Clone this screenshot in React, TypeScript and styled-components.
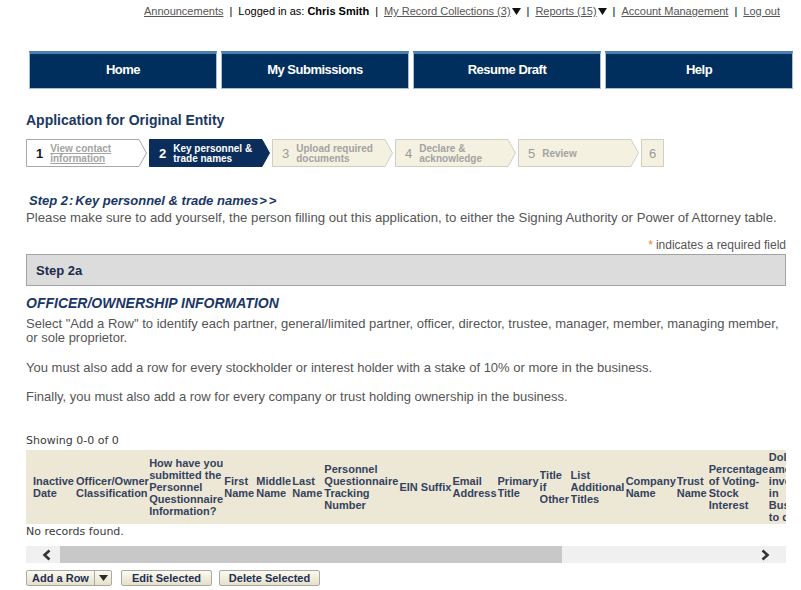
import React from 'react';
import styled, { createGlobalStyle } from 'styled-components';

const Global = createGlobalStyle`
  html, body { margin: 0; padding: 0; background: #fff; overflow: hidden; }
  body { font-family: "Liberation Sans", Arial, sans-serif; }
  * { box-sizing: border-box; }
`;

const Page = styled.div`
  width: 801px;
  height: 590px;
  overflow: hidden;
`;

const TopBar = styled.div`
  height: 22px;
  display: flex;
  justify-content: flex-end;
  align-items: center;
  padding-right: 21px;
  font-size: 11px;
  color: #000;
  white-space: nowrap;
`;

const TopLink = styled.a`
  color: #555;
  text-decoration: underline;
  cursor: pointer;
`;

const Sep = styled.span`
  margin: 0 6px;
  color: #000;
`;

const Caret = styled.svg`
  width: 9px;
  height: 7px;
  margin-left: 1px;
  vertical-align: 1px;
`;

const Content = styled.div`
  padding-left: 26px;
  width: 801px;
`;

const Nav = styled.nav`
  display: flex;
  gap: 4px;
  margin: 29px 0 0 3px;
`;

const Tab = styled.a`
  flex: 0 0 188px;
  height: 38px;
  display: flex;
  align-items: center;
  justify-content: center;
  padding-bottom: 4px;
  background: #002f5e;
  border: 1px solid #a7bfd8;
  border-top: 3px solid #4d7db5;
  color: #fff;
  font-family: "Liberation Sans Narrow", "Liberation Sans", Arial, sans-serif;
  font-stretch: condensed;
  font-weight: bold;
  font-size: 13px;
  letter-spacing: -0.5px;
  cursor: pointer;
`;

const Title = styled.h1`
  margin: 22px 0 0;
  font-size: 14px;
  line-height: 18px;
  font-weight: bold;
  color: #1a3766;
`;

const Stepper = styled.div`
  display: flex;
  gap: 2px;
  margin-top: 10px;
  height: 28px;
`;

const StepBox = styled.div<{ $w: number; $pad: number }>`
  position: relative;
  width: ${p => p.$w}px;
  height: 28px;
  display: flex;
  align-items: center;
  gap: 7px;
  padding-left: ${p => p.$pad}px;
`;

const StepShape = styled.svg`
  position: absolute;
  left: 0;
  top: 0;
  z-index: 0;
`;

const StepNum = styled.span<{ $state: string }>`
  position: relative;
  z-index: 1;
  font-size: 13px;
  margin-top: 1px;
  font-weight: ${p => (p.$state === 'future' ? 'normal' : 'bold')};
  color: ${p => (p.$state === 'current' ? '#fff' : p.$state === 'done' ? '#1a1a1a' : '#9a9a9a')};
`;

const StepLabel = styled.span<{ $state: string }>`
  position: relative;
  z-index: 1;
  margin-top: 2px;
  font-size: 10px;
  line-height: 10px;
  font-weight: bold;
  color: ${p => (p.$state === 'current' ? '#fff' : '#a3a3a3')};
  text-decoration: ${p => (p.$state === 'done' ? 'underline' : 'none')};
`;

const StepHeading = styled.h2`
  margin: 25px 0 0 3px;
  font-size: 13px;
  line-height: 18px;
  font-weight: bold;
  font-style: italic;
  color: #1a3766;
`;

const Colon = styled.span`
  margin: 0 2px 0 1px;
`;

const Arrows = styled.span`
  margin-left: 1px;
  letter-spacing: 2px;
`;

const Para = styled.p<{ $mt?: number; $size?: number; $lh?: number }>`
  margin: ${p => p.$mt ?? 0}px 0 0;
  font-size: ${p => p.$size ?? 13}px;
  line-height: ${p => p.$lh ?? 14}px;
  color: #555;
  width: 760px;
`;

const Required = styled.div`
  margin-top: 13px;
  width: 760px;
  text-align: right;
  font-size: 12px;
  line-height: 12px;
  color: #555;
`;

const Star = styled.span`
  color: #e8833a;
  margin-right: 3px;
`;

const SectionBar = styled.div`
  margin-top: 3px;
  width: 760px;
  height: 32px;
  background: #dcdcdc;
  border: 1px solid #a3a3a3;
  display: flex;
  align-items: center;
  padding-left: 9px;
  font-size: 13px;
  font-weight: bold;
  color: #1b2b4b;
`;

const SectionHeading = styled.h3`
  margin: 9px 0 0;
  font-size: 14px;
  line-height: 16px;
  font-weight: bold;
  font-style: italic;
  color: #1a3766;
`;

const GridInfo = styled.div<{ $mt: number }>`
  margin-top: ${p => p.$mt}px;
  font-family: "DejaVu Sans", Verdana, sans-serif;
  font-size: 11px;
  line-height: 13px;
  color: #3a3a3a;
`;

const TableClip = styled.div`
  margin-top: 3px;
  width: 760px;
  overflow: hidden;
`;

const Table = styled.table`
  border-collapse: collapse;
  table-layout: fixed;
  width: 795px;
`;

const Th = styled.th<{ $first?: boolean }>`
  background: #ede8d6;
  padding: 1px 0 1px ${p => (p.$first ? 7 : 0)}px;
  text-align: left;
  vertical-align: middle;
  font-size: 11px;
  line-height: 12px;
  font-weight: bold;
  color: #34425f;
  overflow: hidden;
`;

const NoWrap = styled.span`
  white-space: nowrap;
`;

const ScrollBar = styled.div`
  margin-top: 8px;
  width: 760px;
  height: 17px;
  background: #f0f0f0;
  display: flex;
  align-items: stretch;
`;

const ScrollBtn = styled.div<{ $side: 'left' | 'right' }>`
  width: 34px;
  display: flex;
  align-items: center;
  justify-content: center;
  padding-left: ${p => (p.$side === 'left' ? 8 : 0)}px;
  padding-right: ${p => (p.$side === 'right' ? 8 : 0)}px;
`;

const Thumb = styled.div`
  width: 502px;
  background: #c8c8c8;
`;

const Track = styled.div`
  flex: 1;
`;

const ButtonRow = styled.div`
  margin-top: 7px;
  display: flex;
  align-items: center;
`;

const Btn = styled.button<{ $w: number; $ml?: number }>`
  width: ${p => p.$w}px;
  height: 16px;
  margin-left: ${p => p.$ml ?? 0}px;
  padding: 0;
  border: 1px solid #a9a9a9;
  border-radius: 2px;
  background: linear-gradient(#fcfaf1, #e7e0c8);
  font-family: "Liberation Sans", Arial, sans-serif;
  font-size: 11px;
  font-weight: bold;
  color: #1d2f55;
  display: flex;
  align-items: center;
  justify-content: center;
  cursor: pointer;
`;

const SplitBtn = styled.div`
  display: flex;
  height: 16px;
  border: 1px solid #a9a9a9;
  border-radius: 2px;
  background: linear-gradient(#fcfaf1, #e7e0c8);
  font-size: 11px;
  font-weight: bold;
  color: #1d2f55;
`;

const SplitMain = styled.span`
  width: 68px;
  display: flex;
  align-items: center;
  justify-content: center;
  border-right: 1px solid #a9a9a9;
`;

const SplitArrow = styled.span`
  width: 16px;
  display: flex;
  align-items: center;
  justify-content: center;
`;

type StepDef = { n: string; label: React.ReactNode; state: 'done' | 'current' | 'future'; w: number; arrow: boolean };

const steps: StepDef[] = [
  { n: '1', label: <>View contact<br />information</>, state: 'done', w: 121, arrow: true },
  { n: '2', label: <>Key personnel &amp;<br />trade names</>, state: 'current', w: 121, arrow: true },
  { n: '3', label: <>Upload required<br />documents</>, state: 'future', w: 121, arrow: true },
  { n: '4', label: <>Declare &amp;<br />acknowledge</>, state: 'future', w: 121, arrow: true },
  { n: '5', label: <>Review</>, state: 'future', w: 121, arrow: true },
  { n: '6', label: null, state: 'future', w: 23, arrow: false },
];

const shapeColors = (s: string) =>
  s === 'current'
    ? { fill: '#0b2d5b', stroke: '#0b2d5b' }
    : s === 'done'
    ? { fill: '#ffffff', stroke: '#a8a8a8' }
    : { fill: '#f4f1e1', stroke: '#cfcfc4' };

const Step: React.FC<{ d: StepDef }> = ({ d }) => {
  const c = shapeColors(d.state);
  const w = d.w;
  const pts = d.arrow
    ? `0.5,0.5 ${w - 8},0.5 ${w - 0.5},14 ${w - 8},27.5 0.5,27.5`
    : `0.5,0.5 ${w - 0.5},0.5 ${w - 0.5},27.5 0.5,27.5`;
  return (
    <StepBox $w={w} $pad={d.arrow ? 10 : 8}>
      <StepShape width={w} height={28} viewBox={`0 0 ${w} 28`}>
        <polygon points={pts} fill={c.fill} stroke={c.stroke} strokeWidth={1} />
      </StepShape>
      <StepNum $state={d.state}>{d.n}</StepNum>
      {d.label && <StepLabel $state={d.state}>{d.label}</StepLabel>}
    </StepBox>
  );
};

const columns: { w: number; label: React.ReactNode }[] = [
  { w: 50, label: 'Inactive Date' },
  { w: 73, label: <><NoWrap>Officer/Owner</NoWrap> Classification</> },
  { w: 75, label: 'How have you submitted the Personnel Questionnaire Information?' },
  { w: 32, label: 'First Name' },
  { w: 36, label: 'Middle Name' },
  { w: 32, label: 'Last Name' },
  { w: 75, label: 'Personnel Questionnaire Tracking Number' },
  { w: 53, label: 'EIN Suffix' },
  { w: 45, label: 'Email Address' },
  { w: 42, label: 'Primary Title' },
  { w: 31, label: 'Title if Other' },
  { w: 55, label: 'List Additional Titles' },
  { w: 51, label: 'Company Name' },
  { w: 32, label: 'Trust Name' },
  { w: 60, label: 'Percentage of Voting-Stock Interest' },
  { w: 52, label: 'Dollar amount invested in Business to date' },
];

const DownCaret = () => (
  <Caret viewBox="0 0 9 7">
    <polygon points="0,0 9,0 4.5,7" fill="#111" />
  </Caret>
);

const Chevron: React.FC<{ dir: 'left' | 'right' }> = ({ dir }) => (
  <svg width="10" height="12" viewBox="0 0 10 12">
    <polyline
      points={dir === 'left' ? '7.5,1.5 2.5,6 7.5,10.5' : '2.5,1.5 7.5,6 2.5,10.5'}
      fill="none"
      stroke="#333"
      strokeWidth="2.6"
    />
  </svg>
);

export default function App() {
  return (
    <Page>
      <Global />
      <TopBar>
        <TopLink>Announcements</TopLink>
        <Sep>|</Sep>
        <span>
          Logged in as: <b>Chris Smith</b>
        </span>
        <Sep>|</Sep>
        <TopLink>My Record Collections (3)</TopLink>
        <DownCaret />
        <Sep>|</Sep>
        <TopLink>Reports (15)</TopLink>
        <DownCaret />
        <Sep>|</Sep>
        <TopLink>Account Management</TopLink>
        <Sep>|</Sep>
        <TopLink>Log out</TopLink>
      </TopBar>

      <Content>
        <Nav>
          <Tab>Home</Tab>
          <Tab>My Submissions</Tab>
          <Tab>Resume Draft</Tab>
          <Tab>Help</Tab>
        </Nav>

        <Title>Application for Original Entity</Title>

        <Stepper>
          {steps.map(s => (
            <Step key={s.n} d={s} />
          ))}
        </Stepper>

        <StepHeading>
          Step 2<Colon>:</Colon>Key personnel &amp; trade names<Arrows>&gt;&gt;</Arrows>
        </StepHeading>
        <Para $size={13.2} $lh={16}>
          Please make sure to add yourself, the person filling out this application, to either the Signing Authority or
          Power of Attorney table.
        </Para>

        <Required>
          <Star>*</Star>indicates a required field
        </Required>

        <SectionBar>Step 2a</SectionBar>

        <SectionHeading>OFFICER/OWNERSHIP INFORMATION</SectionHeading>
        <Para $mt={6}>
          Select "Add a Row" to identify each partner, general/limited partner, officer, director, trustee, manager,
          member, managing member, or sole proprietor.
        </Para>
        <Para $mt={16}>
          You must also add a row for every stockholder or interest holder with a stake of 10% or more in the business.
        </Para>
        <Para $mt={15}>Finally, you must also add a row for every company or trust holding ownership in the business.</Para>

        <GridInfo $mt={30}>Showing 0-0 of 0</GridInfo>
        <TableClip>
          <Table>
            <colgroup>
              {columns.map((c, i) => (
                <col key={i} style={{ width: c.w }} />
              ))}
            </colgroup>
            <thead>
              <tr>
                {columns.map((c, i) => (
                  <Th key={i} $first={i === 0}>
                    {c.label}
                  </Th>
                ))}
              </tr>
            </thead>
          </Table>
        </TableClip>
        <GridInfo $mt={1}>No records found.</GridInfo>

        <ScrollBar>
          <ScrollBtn $side="left">
            <Chevron dir="left" />
          </ScrollBtn>
          <Thumb />
          <Track />
          <ScrollBtn $side="right">
            <Chevron dir="right" />
          </ScrollBtn>
        </ScrollBar>

        <ButtonRow>
          <SplitBtn>
            <SplitMain>Add a Row</SplitMain>
            <SplitArrow>
              <svg width="9" height="6" viewBox="0 0 9 6">
                <polygon points="0,0 9,0 4.5,6" fill="#2a2a2a" />
              </svg>
            </SplitArrow>
          </SplitBtn>
          <Btn $w={91} $ml={9}>
            Edit Selected
          </Btn>
          <Btn $w={101} $ml={7}>
            Delete Selected
          </Btn>
        </ButtonRow>
      </Content>
    </Page>
  );
}
